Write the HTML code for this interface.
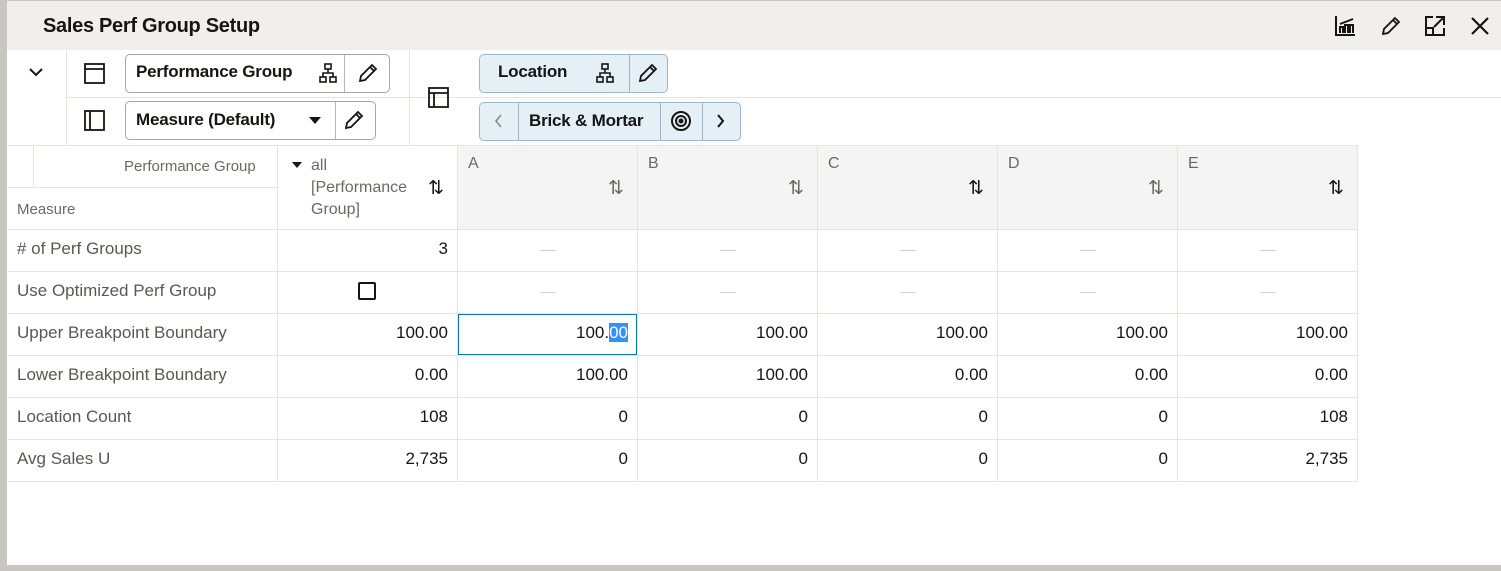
<!DOCTYPE html>
<html><head><meta charset="utf-8"><style>
*{box-sizing:border-box;margin:0;padding:0}
body{width:1501px;height:571px;overflow:hidden;background:#fff;font-family:"Liberation Sans",sans-serif;color:#161513;position:relative}
.a{position:absolute}
.frame{left:0;top:0;width:1501px;height:571px;border-left:7px solid #c9c6c1;border-top:1px solid #c9c6c1;border-bottom:6px solid #c9c6c1}
.title{left:7px;top:1px;width:1494px;height:49px;background:#f0efee}
.title span{position:absolute;left:36px;top:14px;font-size:20px;font-weight:bold;color:#161513;letter-spacing:-0.3px}
.box{border:1px solid #a9a7a4;border-radius:5px;background:#fff;height:39px}
.blue{background:#e4f0f6;border-color:#9db7c6}
.lbl{position:absolute;top:9px;font-size:17px;font-weight:bold;letter-spacing:-0.2px}
.div{position:absolute;top:0;width:1px;height:37px;background:#b9b7b4}
.hl{background:#e6e4e1;height:1px}
.vl{background:#e6e4e1;width:1px}
.cell{position:absolute;font-size:17px;height:42px;line-height:40px}
.rh{color:#5a5855;left:17px}
.num{text-align:right;width:170px}
.dash{width:16px;height:1px;background:#d3d1ce}
.hdr{font-size:16px;color:#6b6966}
</style></head><body>
<div class="a frame"></div>
<div class="a title"><span>Sales Perf Group Setup</span></div>
<svg class="a" style="left:1334px;top:15px" width="22" height="22" viewBox="0 0 22 22" fill="none" stroke="#161513" stroke-width="2"><path d="M2 1v19h19M6 18v-6h3v6M11 18v-8h3v8M16 18v-8h3v8M6 9l13-5"/></svg>
<svg class="a" style="left:1380px;top:15px" width="22" height="22" viewBox="0 0 22 22" fill="none" stroke="#161513" stroke-width="1.8"><path d="M3 19l1-5L15 3l4 4L8 18zM13 5l4 4"/></svg>
<svg class="a" style="left:1424px;top:15px" width="22" height="22" viewBox="0 0 22 22" fill="none" stroke="#161513" stroke-width="2"><path d="M9 2H2v18h18v-7M2 13h7v7M12 2h8v8M20 2L10 12"/></svg>
<svg class="a" style="left:1470px;top:16px" width="20" height="20" viewBox="0 0 20 20" stroke="#161513" stroke-width="2.2"><path d="M2 2l16 16M18 2L2 18"/></svg>
<div class="a vl" style="left:66px;top:50px;height:95px"></div>
<div class="a vl" style="left:409px;top:50px;height:95px"></div>
<div class="a hl" style="left:66px;top:97px;width:1435px"></div>
<svg class="a" style="left:28px;top:66px" width="16" height="12" viewBox="0 0 16 12" fill="none" stroke="#161513" stroke-width="2"><path d="M2 3l6 6 6-6"/></svg>
<svg class="a" style="left:84px;top:63px" width="21" height="21" viewBox="0 0 21 21" fill="none" stroke="#161513" stroke-width="1.8"><rect x="1" y="1" width="19" height="19"/><path d="M1 6h19"/></svg>
<svg class="a" style="left:84px;top:110px" width="21" height="21" viewBox="0 0 21 21" fill="none" stroke="#161513" stroke-width="1.8"><rect x="1" y="1" width="19" height="19"/><path d="M6 1v19"/></svg>
<svg class="a" style="left:428px;top:87px" width="21" height="21" viewBox="0 0 21 21" fill="none" stroke="#161513" stroke-width="1.8"><rect x="1" y="1" width="19" height="19"/><path d="M1 6h19M6 6v14"/></svg>
<div class="a box" style="left:125px;top:54px;width:265px"><span class="lbl" style="left:10px;top:7px">Performance Group</span><div class="div" style="left:218px"></div></div>
<div class="a box" style="left:125px;top:101px;width:251px"><span class="lbl" style="left:10px;top:8px">Measure (Default)</span><div class="div" style="left:209px"></div></div>
<svg class="a" style="left:309px;top:117px" width="12" height="8"><path d="M0 0h12L6 7z" fill="#161513"/></svg>
<div class="a box blue" style="left:479px;top:54px;width:189px"><span class="lbl" style="left:18px;top:7px">Location</span><div class="div" style="left:149px;background:#9db7c6"></div></div>
<div class="a box blue" style="left:479px;top:102px;width:262px"><div class="div" style="left:38px;background:#9db7c6"></div><span class="lbl" style="left:49px;top:8px">Brick &amp; Mortar</span><div class="div" style="left:180px;background:#9db7c6"></div><div class="div" style="left:222px;background:#9db7c6"></div></div>
<svg class="a" style="left:318px;top:63px" width="20" height="20" viewBox="0 0 20 20" fill="none" stroke="#161513" stroke-width="1.6"><rect x="7" y="1" width="6" height="5"/><rect x="2" y="14" width="6" height="5"/><rect x="12" y="14" width="6" height="5"/><path d="M10 6v4M5 14v-4h10v4"/></svg>
<svg class="a" style="left:595px;top:63px" width="20" height="20" viewBox="0 0 20 20" fill="none" stroke="#161513" stroke-width="1.6"><rect x="7" y="1" width="6" height="5"/><rect x="2" y="14" width="6" height="5"/><rect x="12" y="14" width="6" height="5"/><path d="M10 6v4M5 14v-4h10v4"/></svg>
<svg class="a" style="left:357px;top:62px" width="22" height="22" viewBox="0 0 22 22" fill="none" stroke="#161513" stroke-width="1.8"><path d="M3 19l1-5L15 3l4 4L8 18zM13 5l4 4"/></svg>
<svg class="a" style="left:343px;top:109px" width="22" height="22" viewBox="0 0 22 22" fill="none" stroke="#161513" stroke-width="1.8"><path d="M3 19l1-5L15 3l4 4L8 18zM13 5l4 4"/></svg>
<svg class="a" style="left:637px;top:62px" width="22" height="22" viewBox="0 0 22 22" fill="none" stroke="#161513" stroke-width="1.8"><path d="M3 19l1-5L15 3l4 4L8 18zM13 5l4 4"/></svg>
<svg class="a" style="left:493px;top:113px" width="10" height="16" viewBox="0 0 10 16" fill="none" stroke="#8a8886" stroke-width="1.6"><path d="M8 2L3 8l5 6"/></svg>
<svg class="a" style="left:670px;top:110px" width="22" height="22" viewBox="0 0 22 22" fill="none" stroke="#161513" stroke-width="2"><circle cx="11" cy="11" r="9"/><circle cx="11" cy="11" r="5"/><circle cx="11" cy="11" r="1.5" fill="#161513"/></svg>
<svg class="a" style="left:716px;top:113px" width="10" height="16" viewBox="0 0 10 16" fill="none" stroke="#161513" stroke-width="2"><path d="M2 2l5 6-5 6"/></svg>
<div class="a" style="left:458px;top:145px;width:900px;height:84px;background:#f4f4f4"></div>
<div class="a hl" style="left:8px;top:145px;width:1350px"></div>
<div class="a hl" style="left:8px;top:187px;width:270px"></div>
<div class="a vl" style="left:33px;top:145px;height:42px"></div>
<div class="a hl" style="left:8px;top:229px;width:1350px"></div>
<div class="a hl" style="left:8px;top:271px;width:1350px"></div>
<div class="a hl" style="left:8px;top:313px;width:1350px"></div>
<div class="a hl" style="left:8px;top:355px;width:1350px"></div>
<div class="a hl" style="left:8px;top:397px;width:1350px"></div>
<div class="a hl" style="left:8px;top:439px;width:1350px"></div>
<div class="a hl" style="left:8px;top:481px;width:1350px"></div>
<div class="a vl" style="left:277px;top:145px;height:337px"></div>
<div class="a vl" style="left:457px;top:145px;height:337px"></div>
<div class="a vl" style="left:637px;top:145px;height:337px"></div>
<div class="a vl" style="left:817px;top:145px;height:337px"></div>
<div class="a vl" style="left:997px;top:145px;height:337px"></div>
<div class="a vl" style="left:1177px;top:145px;height:337px"></div>
<div class="a vl" style="left:1357px;top:145px;height:337px"></div>
<div class="a hdr" style="left:124px;top:158px;font-size:15px">Performance Group</div>
<div class="a hdr" style="left:17px;top:201px;font-size:15px">Measure</div>
<svg class="a" style="left:292px;top:162px" width="10" height="7"><path d="M0 0h10L5 6z" fill="#161513"/></svg>
<div class="a hdr" style="left:311px;top:155px;width:96px;overflow:hidden;white-space:nowrap;line-height:22px">all<br>[Performance<br>Group]</div>
<div class="a hdr" style="left:468px;top:155px">A</div>
<div class="a hdr" style="left:648px;top:155px">B</div>
<div class="a hdr" style="left:828px;top:155px">C</div>
<div class="a hdr" style="left:1008px;top:155px">D</div>
<div class="a hdr" style="left:1188px;top:155px">E</div>
<div class="a" style="left:428px;top:177px;font-size:19px;color:#161513">⇅</div>
<div class="a" style="left:608px;top:177px;font-size:19px;color:#6b6966">⇅</div>
<div class="a" style="left:788px;top:177px;font-size:19px;color:#6b6966">⇅</div>
<div class="a" style="left:968px;top:177px;font-size:19px;color:#161513">⇅</div>
<div class="a" style="left:1148px;top:177px;font-size:19px;color:#6b6966">⇅</div>
<div class="a" style="left:1328px;top:177px;font-size:19px;color:#161513">⇅</div>
<div class="cell rh" style="top:229px">#&nbsp;of Perf Groups</div>
<div class="cell rh" style="top:271px">Use Optimized Perf Group</div>
<div class="cell rh" style="top:313px">Upper Breakpoint Boundary</div>
<div class="cell rh" style="top:355px">Lower Breakpoint Boundary</div>
<div class="cell rh" style="top:397px">Location Count</div>
<div class="cell rh" style="top:439px">Avg Sales U</div>
<div class="cell num" style="left:278px;top:229px">3</div>
<div class="a" style="left:358px;top:282px;width:18px;height:18px;border:2px solid #161513;border-radius:2px"></div>
<div class="a dash" style="left:540px;top:250px"></div><div class="a dash" style="left:720px;top:250px"></div><div class="a dash" style="left:900px;top:250px"></div><div class="a dash" style="left:1080px;top:250px"></div><div class="a dash" style="left:1260px;top:250px"></div>
<div class="a dash" style="left:540px;top:292px"></div><div class="a dash" style="left:720px;top:292px"></div><div class="a dash" style="left:900px;top:292px"></div><div class="a dash" style="left:1080px;top:292px"></div><div class="a dash" style="left:1260px;top:292px"></div>
<div class="a" style="left:458px;top:314px;width:179px;height:41px;border:1px solid #0e7a9e"></div>
<div class="cell num" style="left:278px;top:313px">100.00</div>
<div class="cell num" style="left:458px;top:313px">100.<span style="background:#3390ff;color:#fff">00</span></div>
<div class="cell num" style="left:638px;top:313px">100.00</div>
<div class="cell num" style="left:818px;top:313px">100.00</div>
<div class="cell num" style="left:998px;top:313px">100.00</div>
<div class="cell num" style="left:1178px;top:313px">100.00</div>
<div class="cell num" style="left:278px;top:355px">0.00</div>
<div class="cell num" style="left:458px;top:355px">100.00</div>
<div class="cell num" style="left:638px;top:355px">100.00</div>
<div class="cell num" style="left:818px;top:355px">0.00</div>
<div class="cell num" style="left:998px;top:355px">0.00</div>
<div class="cell num" style="left:1178px;top:355px">0.00</div>
<div class="cell num" style="left:278px;top:397px">108</div>
<div class="cell num" style="left:458px;top:397px">0</div>
<div class="cell num" style="left:638px;top:397px">0</div>
<div class="cell num" style="left:818px;top:397px">0</div>
<div class="cell num" style="left:998px;top:397px">0</div>
<div class="cell num" style="left:1178px;top:397px">108</div>
<div class="cell num" style="left:278px;top:439px">2,735</div>
<div class="cell num" style="left:458px;top:439px">0</div>
<div class="cell num" style="left:638px;top:439px">0</div>
<div class="cell num" style="left:818px;top:439px">0</div>
<div class="cell num" style="left:998px;top:439px">0</div>
<div class="cell num" style="left:1178px;top:439px">2,735</div>
</body></html>
